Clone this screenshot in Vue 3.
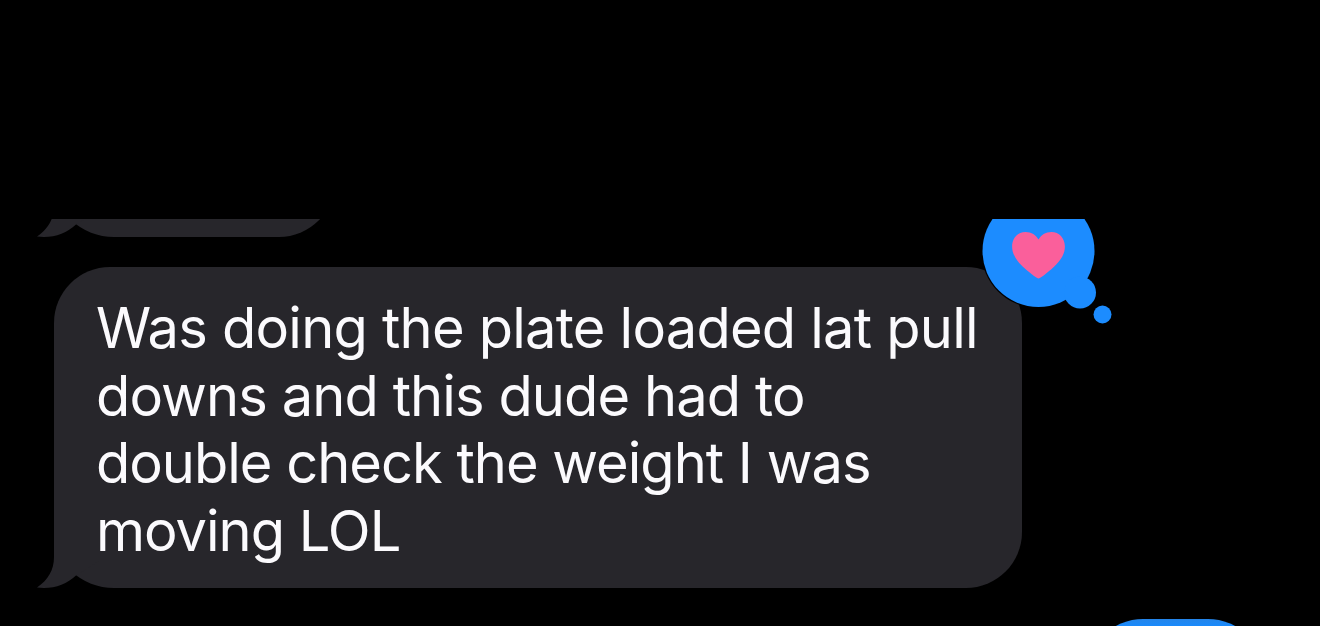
<template>
  <div class="screen">
    <div class="status-area"></div>

    <main class="conversation">
      <div class="bubble received previous">
        <svg class="tail" viewBox="0 0 63 60">
          <path :d="tailPath" />
        </svg>
      </div>

      <div class="bubble received message">
        <p class="text">
          <span
            v-for="(line, i) in lines"
            :key="i"
            class="line"
            :class="'line-' + (i + 1)"
          >{{ line }}</span>
        </p>
        <svg class="tail" viewBox="0 0 63 60">
          <path :d="tailPath" />
        </svg>
        <svg class="reaction" viewBox="0.5 0 140 140">
          <circle class="ring" cx="61" cy="61" r="57.2" />
          <g class="cloud">
            <circle cx="61" cy="61" r="56" />
            <circle cx="102.5" cy="102.5" r="16" />
            <circle cx="125" cy="124.5" r="9" />
          </g>
          <path
            class="heart"
            d="M61 88.500 C59.500 88.500 57 86.300 54 84 C43 75.500 34.600 67 34.600 56.500 C34.600 48 40.500 42 48 42 C54 42 58.500 45 61 49.500 C63.500 45 68 42 74 42 C81.500 42 87.400 48 87.400 56.500 C87.400 67 79 75.500 68 84 C65 86.300 62.500 88.500 61 88.500 Z"
          />
        </svg>
      </div>

      <div class="bubble sent"></div>
    </main>
  </div>
</template>

<script setup>
const lines = [
  'Was doing the plate loaded lat pull',
  'downs and this dude had to',
  'double check the weight I was',
  'moving LOL'
]

// Shared by every received bubble, anchored to its bottom left corner
const tailPath = 'M17 2 V29 C17 42 11 52 0 59.500 C15 61.500 29 57 39 47.500 L62 33 V2 Z'
</script>

<style>
body {
  margin: 0;
  background: #000;
}
</style>

<style scoped>
.screen {
  display: flex;
  flex-direction: column;
  width: 1320px;
  height: 626px;
  overflow: hidden;
  background: #000;
  font-family: Inter, "Liberation Sans", sans-serif;
}

.status-area {
  flex: 0 0 219px;
}

/* Clips the messages that scroll under the header */
.conversation {
  flex: 0 0 407px;
  display: flex;
  flex-direction: column;
  align-items: flex-start;
  box-sizing: border-box;
  padding: 0 56px 0 54px;
  overflow: hidden;
}

.bubble {
  position: relative;
  flex-shrink: 0;
  box-sizing: border-box;
  border-radius: 56px;
}

.received {
  border-bottom-left-radius: 60px 56px;
  background: #27262b;
  color: #fbfafd;
}

.previous {
  width: 281px;
  height: 114px;
  margin-top: -96px;
}

.message {
  width: 968px;
  height: 321px;
  margin-top: 30px;
  padding: 28px 42px;
}

.sent {
  align-self: flex-end;
  width: 177px;
  height: 114px;
  margin-top: 30.5px;
  background: linear-gradient(#2585e8, #168aff 8px);
}

.text {
  margin: 0;
  font-size: 56px;
  line-height: 67.6px;
}

.line {
  display: block;
  white-space: nowrap;
}

.line-1 {
  letter-spacing: -0.77px;
}

.line-2 {
  letter-spacing: -0.9px;
}

.line-3 {
  letter-spacing: -1px;
}

.line-4 {
  letter-spacing: -1px;
}

.tail {
  position: absolute;
  left: -17px;
  bottom: 0;
  width: 63px;
  height: 60px;
  fill: #27262b;
}

.reaction {
  position: absolute;
  left: 924px;
  top: -77px;
  width: 140px;
  height: 140px;
}

.ring {
  fill: #000;
}

.cloud {
  fill: #1c8cff;
}

.heart {
  fill: #fa5f9b;
}
</style>
